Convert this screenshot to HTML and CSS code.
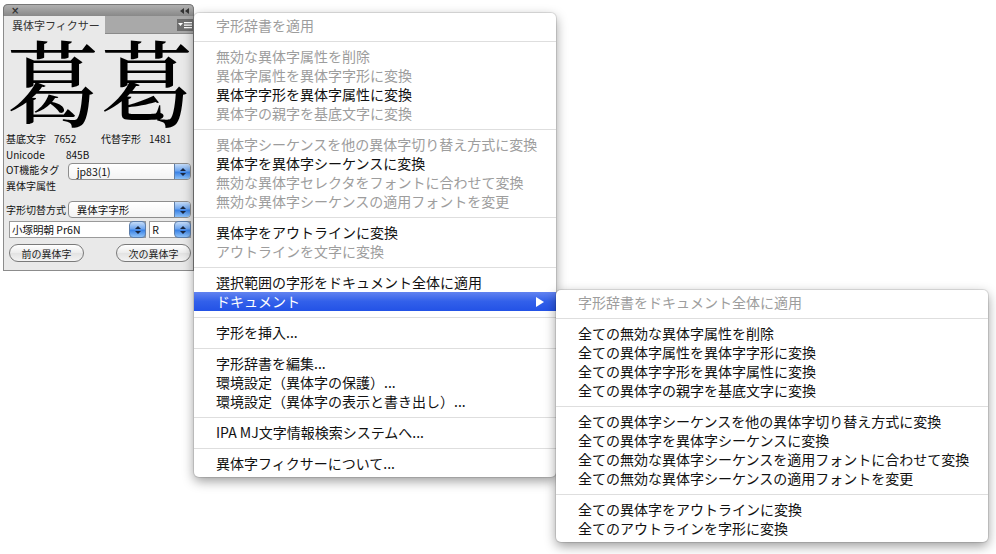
FILE: index.html
```html
<!DOCTYPE html>
<html lang="ja">
<head>
    <meta charset="UTF-8">
    <title>異体字フィクサー</title>
    <link rel="stylesheet" href="styles.css">
</head>
<body>
    <!-- Palette window -->
    <div class="palette">
        <div class="titlebar">
            <span class="close">×</span>
            <svg class="collapse" width="9" height="6" viewBox="0 0 9 6"><path d="M4 0 L0 3 L4 6 Z M9 0 L5 3 L9 6 Z" fill="#333"/></svg>
        </div>
        <div class="tabrow">
            <div class="tab">異体字フィクサー</div>
            <div class="tab-fill">
                <span class="panel-menu">
                    <svg width="16" height="12" viewBox="0 0 16 12">
                        <path d="M1 4 L6 4 L3.5 7 Z" fill="#fff"/>
                        <rect x="7" y="3" width="8" height="1.3" fill="#fff"/>
                        <rect x="7" y="5.5" width="8" height="1.3" fill="#fff"/>
                        <rect x="7" y="8" width="8" height="1.3" fill="#fff"/>
                    </svg>
                </span>
            </div>
        </div>
        <div class="glyphs">
            <span>葛</span><span class="alt">葛</span>
        </div>
        <div class="info">
            <div class="row">
                <span class="w48">基底文字</span><span class="w47">7652</span><span class="w48">代替字形</span><span>1481</span>
            </div>
            <div class="row row-uni">
                <span class="w59">Unicode</span><span>845B</span>
            </div>
            <div class="row row-ot">
                <div class="labels">
                    <span>OT機能タグ</span>
                    <span>異体字属性</span>
                </div>
                <div class="popup">
                    <span class="value">jp83(1)</span>
                    <span class="stepper"><i class="up"></i><i class="down"></i></span>
                </div>
            </div>
            <div class="row row-mode">
                <span class="w62">字形切替方式</span>
                <div class="popup">
                    <span class="value">異体字字形</span>
                    <span class="stepper"><i class="up"></i><i class="down"></i></span>
                </div>
            </div>
            <div class="row row-font">
                <div class="combo font-name">
                    <span class="value">小塚明朝 Pr6N</span>
                    <span class="stepper"><i class="up"></i><i class="down"></i></span>
                </div>
                <div class="combo font-style">
                    <span class="value">R</span>
                    <span class="stepper"><i class="up"></i><i class="down"></i></span>
                </div>
            </div>
            <div class="row row-buttons">
                <button class="pill">前の異体字</button>
                <button class="pill">次の異体字</button>
            </div>
        </div>
    </div>

    <!-- Panel menu -->
    <div class="menu main-menu">
        <div class="item off">字形辞書を適用</div>
        <div class="sep"></div>
        <div class="item off">無効な異体字属性を削除</div>
        <div class="item off">異体字属性を異体字字形に変換</div>
        <div class="item">異体字字形を異体字属性に変換</div>
        <div class="item off">異体字の親字を基底文字に変換</div>
        <div class="sep"></div>
        <div class="item off">異体字シーケンスを他の異体字切り替え方式に変換</div>
        <div class="item">異体字を異体字シーケンスに変換</div>
        <div class="item off">無効な異体字セレクタをフォントに合わせて変換</div>
        <div class="item off">無効な異体字シーケンスの適用フォントを変更</div>
        <div class="sep"></div>
        <div class="item">異体字をアウトラインに変換</div>
        <div class="item off">アウトラインを文字に変換</div>
        <div class="sep"></div>
        <div class="item">選択範囲の字形をドキュメント全体に適用</div>
        <div class="item hl">ドキュメント<span class="arrow"></span></div>
        <div class="sep"></div>
        <div class="item">字形を挿入...</div>
        <div class="sep"></div>
        <div class="item">字形辞書を編集...</div>
        <div class="item">環境設定（異体字の保護）...</div>
        <div class="item">環境設定（異体字の表示と書き出し）...</div>
        <div class="sep"></div>
        <div class="item">IPA MJ文字情報検索システムへ...</div>
        <div class="sep"></div>
        <div class="item">異体字フィクサーについて...</div>
    </div>

    <!-- Submenu: ドキュメント -->
    <div class="menu sub-menu">
        <div class="item off">字形辞書をドキュメント全体に適用</div>
        <div class="sep"></div>
        <div class="item">全ての無効な異体字属性を削除</div>
        <div class="item">全ての異体字属性を異体字字形に変換</div>
        <div class="item">全ての異体字字形を異体字属性に変換</div>
        <div class="item">全ての異体字の親字を基底文字に変換</div>
        <div class="sep"></div>
        <div class="item">全ての異体字シーケンスを他の異体字切り替え方式に変換</div>
        <div class="item">全ての異体字を異体字シーケンスに変換</div>
        <div class="item">全ての無効な異体字シーケンスを適用フォントに合わせて変換</div>
        <div class="item">全ての無効な異体字シーケンスの適用フォントを変更</div>
        <div class="sep"></div>
        <div class="item">全ての異体字をアウトラインに変換</div>
        <div class="item">全てのアウトラインを字形に変換</div>
    </div>
</body>
</html>
```

FILE: styles.css
```css
body {
    margin: 0;
    background: #fff;
    font-family: "Noto Sans CJK JP", sans-serif;
    color: #111;
    position: relative;
    width: 996px;
    height: 554px;
    overflow: hidden;
}

/* ---------- palette ---------- */

.palette {
    margin: 4px 0 0 3px;
    width: 191px;
    height: 267px;
    background: #e9e9e9;
    border: 1px solid #8c8c8c;
    border-top: none;
    border-radius: 5px 5px 0 0;
    box-sizing: border-box;
}

.titlebar {
    height: 12px;
    margin: 0 -1px;
    background: linear-gradient(#b0b0b0, #888);
    border: 1px solid #777;
    border-bottom: none;
    border-radius: 5px 5px 0 0;
    display: flex;
    align-items: center;
    justify-content: space-between;
    padding: 0 4px 0 7px;
    box-sizing: border-box;
}

.close {
    font-family: "DejaVu Sans", sans-serif;
    font-size: 10px;
    font-weight: bold;
    line-height: 10px;
    color: #333;
}

.tabrow {
    height: 18px;
    display: flex;
}

.tab {
    width: 101px;
    font-size: 11px;
    line-height: 18px;
    padding-left: 8px;
    color: #333;
    white-space: nowrap;
    box-sizing: border-box;
    background: #e9e9e9;
}

.tab-fill {
    flex: 1;
    background: #a9a9a9;
    border-bottom: 1px solid #8a8a8a;
    display: flex;
    justify-content: flex-end;
    align-items: center;
}

.panel-menu {
    display: flex;
    width: 16px;
    height: 12px;
    background: #6e6e6e;
}

.glyphs {
    height: 92px;
    padding-left: 2px;
    font-family: "Noto Serif CJK JP", "Noto Sans CJK JP", serif;
    font-size: 94px;
    font-weight: 500;
    line-height: 92px;
    color: #000;
    display: flex;
}

.glyphs span {
    display: block;
    height: 92px;
}

.glyphs .alt {
    font-variant-east-asian: jis83;
}

.info {
    padding: 0 2px;
    font-size: 10px;
    color: #111;
}

.info .row {
    display: flex;
    align-items: center;
}

.info .row:first-child {
    height: 22px;
    padding-top: 1px;
}

.w48 { width: 48px; }
.w47 { width: 47px; }
.w59 { width: 60px; }
.w62 { width: 62px; }

.info .row > span,
.labels span {
    white-space: nowrap;
}

.row-uni {
    height: 11px;
}

.row-ot {
    height: 36px;
    align-items: flex-start !important;
    padding-top: 2px;
}

.labels {
    width: 62px;
    display: flex;
    flex-direction: column;
    line-height: 16px;
}

.popup {
    width: 124px;
    height: 17px;
    display: flex;
    border: 1px solid #8d8d8d;
    border-radius: 4px;
    background: linear-gradient(#fff, #f3f3f3);
    box-sizing: border-box;
    margin-top: 1px;
}

.popup .value,
.combo .value {
    flex: 1;
    font-size: 10.5px;
    line-height: 15px;
    padding-left: 8px;
    white-space: nowrap;
}

.stepper {
    width: 15px;
    display: flex;
    flex-direction: column;
    align-items: center;
    justify-content: center;
    gap: 2px;
    background: linear-gradient(#c5dcf8, #6fa6ef 45%, #3a82e6 55%, #8fc2f8);
    border-left: 1px solid #5d7eaa;
    border-radius: 0 3px 3px 0;
}

.stepper i {
    width: 0;
    height: 0;
    border-left: 3px solid transparent;
    border-right: 3px solid transparent;
}

.stepper .up { border-bottom: 3px solid #1b2840; }
.stepper .down { border-top: 3px solid #1b2840; }

.row-mode {
    height: 22px;
}

.row-font {
    height: 17px;
    margin-top: 1px;
    padding-left: 3px;
    gap: 3px;
}

.combo {
    height: 17px;
    display: flex;
    border: 1px solid #9a9a9a;
    background: #fff;
    box-sizing: border-box;
}

.combo .value {
    padding-left: 2px;
}

.combo .stepper {
    border: 1px solid #5d7eaa;
    border-radius: 4px;
    margin: -1px -1px -1px 0;
}

.font-name { width: 138px; }
.font-style { width: 42px; }

.row-buttons {
    margin-top: 6px;
    padding-left: 3px;
    justify-content: space-between;
}

.pill {
    width: 75px;
    height: 18px;
    border: 1px solid #7a7a7a;
    border-radius: 9px;
    background: linear-gradient(#ffffff, #ebebeb 50%, #e2e2e2 51%, #f3f3f3);
    font-family: "Noto Sans CJK JP", sans-serif;
    font-size: 10px;
    color: #222;
    padding: 0;
}

/* ---------- menus ---------- */

.menu {
    position: absolute;
    background: #fff;
    border-radius: 5px;
    padding: 3px 0 4px;
    box-shadow: 0 0 0 1px rgba(0, 0, 0, 0.1), 0 4px 12px rgba(0, 0, 0, 0.4);
    font-size: 14px;
}

.main-menu {
    left: 194px;
    top: 13px;
    width: 362px;
}

.sub-menu {
    left: 556px;
    top: 290px;
    width: 432px;
}

.item {
    height: 19px;
    line-height: 19px;
    padding-left: 22px;
    color: #111;
    white-space: nowrap;
    position: relative;
}

.item.off {
    color: #9d9d9d;
}

.item.hl {
    background: linear-gradient(#6283f0, #3260ea 50%, #2352e6);
    color: #fff;
}

.arrow {
    position: absolute;
    right: 12px;
    top: 5px;
    width: 0;
    height: 0;
    border-top: 5px solid transparent;
    border-bottom: 5px solid transparent;
    border-left: 8px solid #fff;
}

.sep {
    height: 1px;
    background: #dedede;
    margin: 6px 0 5px;
}
```
